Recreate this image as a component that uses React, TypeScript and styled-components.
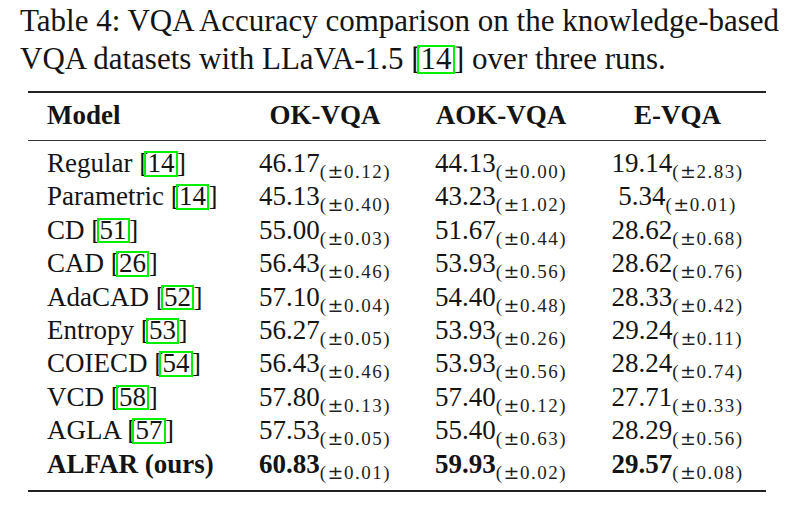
import React from "react";
import styled, { createGlobalStyle } from "styled-components";

const Global = createGlobalStyle`
  html, body { margin: 0; padding: 0; background: #ffffff; }
  body {
    font-family: "Liberation Serif", "Times New Roman", serif;
    color: #141414;
  }
`;

const Page = styled.div`
  width: 793px;
  height: 508px;
  overflow: hidden;
  padding-top: 2px;
  box-sizing: border-box;
`;

const Caption = styled.div`
  margin-left: 20px;
  width: 750px;
  font-size: 31px;
  line-height: 38px;
`;

const CaptionLine = styled.div<{ $justify?: boolean }>`
  white-space: nowrap;
  text-align: ${(p) => (p.$justify ? "justify" : "left")};
  text-align-last: ${(p) => (p.$justify ? "justify" : "left")};
`;

const Cite = styled.span`
  display: inline-block;
  border: 2px solid #00f000;
  line-height: 0.8em;
  padding: 0 0.04em;
  margin-left: -0.14em;
  margin-right: -0.02em;
`;

const Table = styled.table`
  margin: 13px 0 0 28px;
  width: 738px;
  border-collapse: collapse;
  table-layout: fixed;
  border-top: 2px solid #222;
  border-bottom: 2px solid #222;
`;

const HeadCell = styled.th<{ $first?: boolean }>`
  font-size: 27px;
  font-weight: bold;
  line-height: 33px;
  padding: 6px 0 8px ${(p) => (p.$first ? "19px" : "0")};
  text-align: ${(p) => (p.$first ? "left" : "center")};
  border-bottom: 1px solid #333;
`;

const Row = styled.tr`
  &:first-child td { padding-top: 6px; }
  &:last-child td { padding-bottom: 9px; }
`;

const NameCell = styled.td<{ $bold?: boolean }>`
  font-size: 27px;
  line-height: 33.4px;
  padding: 0 0 0 19px;
  white-space: nowrap;
  font-weight: ${(p) => (p.$bold ? "bold" : "normal")};
`;

const ValueCell = styled.td`
  font-size: 27px;
  line-height: 33.4px;
  padding: 0;
  text-align: center;
  white-space: nowrap;
`;

const Main = styled.span<{ $bold?: boolean }>`
  font-weight: ${(p) => (p.$bold ? "bold" : "normal")};
`;

const Sub = styled.sub`
  font-size: 19px;
  letter-spacing: 1.5px;
  line-height: 0;
  vertical-align: -6px;
  font-weight: normal;
  color: #1e1e1e;
`;

const Pm = styled.span`
  font-family: "DejaVu Serif", "Liberation Serif", serif;
  font-size: 19px;
  letter-spacing: 0.5px;
`;

type Val = [string, string];
type RowData = { name: string; cite?: string; bold?: boolean; vals: Val[] };

const rows: RowData[] = [
  { name: "Regular", cite: "14", vals: [["46.17", "0.12"], ["44.13", "0.00"], ["19.14", "2.83"]] },
  { name: "Parametric", cite: "14", vals: [["45.13", "0.40"], ["43.23", "1.02"], ["5.34", "0.01"]] },
  { name: "CD", cite: "51", vals: [["55.00", "0.03"], ["51.67", "0.44"], ["28.62", "0.68"]] },
  { name: "CAD", cite: "26", vals: [["56.43", "0.46"], ["53.93", "0.56"], ["28.62", "0.76"]] },
  { name: "AdaCAD", cite: "52", vals: [["57.10", "0.04"], ["54.40", "0.48"], ["28.33", "0.42"]] },
  { name: "Entropy", cite: "53", vals: [["56.27", "0.05"], ["53.93", "0.26"], ["29.24", "0.11"]] },
  { name: "COIECD", cite: "54", vals: [["56.43", "0.46"], ["53.93", "0.56"], ["28.24", "0.74"]] },
  { name: "VCD", cite: "58", vals: [["57.80", "0.13"], ["57.40", "0.12"], ["27.71", "0.33"]] },
  { name: "AGLA", cite: "57", vals: [["57.53", "0.05"], ["55.40", "0.63"], ["28.29", "0.56"]] },
  { name: "ALFAR (ours)", bold: true, vals: [["60.83", "0.01"], ["59.93", "0.02"], ["29.57", "0.08"]] },
];

export default function App() {
  return (
    <Page>
      <Global />
      <Caption>
        <CaptionLine $justify>
          Table 4: VQA Accuracy comparison on the knowledge-based
        </CaptionLine>
        <CaptionLine>
          VQA datasets with LLaVA-1.5 [<Cite>14</Cite>] over three runs.
        </CaptionLine>
      </Caption>
      <Table>
        <colgroup>
          <col style={{ width: 209 }} />
          <col style={{ width: 176 }} />
          <col style={{ width: 176 }} />
          <col style={{ width: 177 }} />
        </colgroup>
        <thead>
          <tr>
            <HeadCell $first>Model</HeadCell>
            <HeadCell>OK-VQA</HeadCell>
            <HeadCell>AOK-VQA</HeadCell>
            <HeadCell>E-VQA</HeadCell>
          </tr>
        </thead>
        <tbody>
          {rows.map((r) => (
            <Row key={r.name}>
              <NameCell $bold={r.bold}>
                {r.name}
                {r.cite && (
                  <>
                    {" "}[<Cite>{r.cite}</Cite>]
                  </>
                )}
              </NameCell>
              {r.vals.map(([v, s], i) => (
                <ValueCell key={i}>
                  <Main $bold={r.bold}>{v}</Main>
                  <Sub>
                    (<Pm>±</Pm>{s})
                  </Sub>
                </ValueCell>
              ))}
            </Row>
          ))}
        </tbody>
      </Table>
    </Page>
  );
}
